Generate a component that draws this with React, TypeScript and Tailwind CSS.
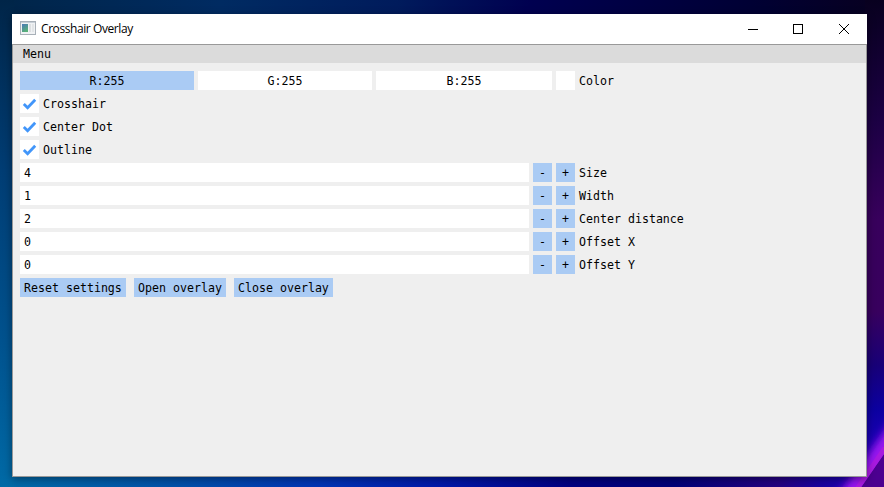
import React from "react";

const mono = "font-['DejaVu_Sans_Mono',monospace] text-[11.627px] leading-[21px] text-black whitespace-pre";

function Check({ label }: { label: string }) {
  return (
    <label className="flex h-[19px] gap-1">
      <span className="h-[19px] w-[19px] bg-white">
        <svg width="19" height="19" viewBox="0 0 19 19" fill="none">
          <path d="M3.8 9.9 L7.6 13.7 L15.2 5.7" stroke="#4296fa" strokeWidth="2.8" />
        </svg>
      </span>
      <span>{label}</span>
    </label>
  );
}

function Stepper({ label, value }: { label: string; value: string }) {
  return (
    <div className="flex h-[19px] gap-1">
      <div className="w-[509px] bg-white pl-1">{value}</div>
      <button className="flex w-[19px] justify-center bg-[#aacbf4]">-</button>
      <button className="flex w-[19px] justify-center bg-[#aacbf4]">+</button>
      <span>{label}</span>
    </div>
  );
}

function Backdrop() {
  return (
    <svg className="absolute inset-0" width="884" height="487">
      <defs>
        <linearGradient id="top">
          <stop offset="0" stopColor="#002548" />
          <stop offset="0.25" stopColor="#002b62" />
          <stop offset="0.45" stopColor="#001b5c" />
          <stop offset="0.6" stopColor="#000050" />
          <stop offset="0.85" stopColor="#000034" />
          <stop offset="1" stopColor="#08001f" />
        </linearGradient>
        <linearGradient id="bottom">
          <stop offset="0" stopColor="#006aa6" />
          <stop offset="0.2" stopColor="#0050a8" />
          <stop offset="0.36" stopColor="#0034b4" />
          <stop offset="0.5" stopColor="#0018a8" />
          <stop offset="0.65" stopColor="#000080" />
          <stop offset="0.76" stopColor="#000078" />
          <stop offset="0.88" stopColor="#240080" />
          <stop offset="0.93" stopColor="#1800a0" />
          <stop offset="1" stopColor="#2400c0" />
        </linearGradient>
        <linearGradient id="left" x2="0" y2="1">
          <stop offset="0" stopColor="#002548" />
          <stop offset="0.35" stopColor="#003d74" />
          <stop offset="0.7" stopColor="#00528e" />
          <stop offset="1" stopColor="#006aa6" />
        </linearGradient>
        <linearGradient id="right" x2="0" y2="1">
          <stop offset="0" stopColor="#08001f" />
          <stop offset="0.25" stopColor="#1c0044" />
          <stop offset="0.45" stopColor="#38005c" />
          <stop offset="0.64" stopColor="#38005e" />
          <stop offset="0.75" stopColor="#180078" />
          <stop offset="0.84" stopColor="#0c00a0" />
          <stop offset="1" stopColor="#3000d0" />
        </linearGradient>
        <filter id="soft" x="-1" y="-1" width="3" height="3"><feGaussianBlur stdDeviation="4" /></filter>
      </defs>
      <rect width="884" height="20" fill="url(#top)" />
      <rect y="470" width="884" height="17" fill="url(#bottom)" />
      <rect width="14" height="487" fill="url(#left)" />
      <rect x="865" width="19" height="487" fill="url(#right)" />
      <path d="M842 504 L899 425" stroke="#9c12f0" strokeWidth="16" filter="url(#soft)" />
      <path d="M861 487 L884 454 V487 Z" fill="#4c0090" />
      <path d="M857 489 L885 448" stroke="#a81ae0" strokeWidth="5" />
    </svg>
  );
}

export default function App() {
  return (
    <div className="relative h-[487px] w-[884px] overflow-hidden bg-[#000050] pl-3 pt-[14px]">
      <Backdrop />
      <main className="relative h-[463px] w-[855px] bg-[#efefef] shadow-[0_2px_8px_rgba(0,0,0,0.4)]">
        <header className="flex h-[30px] items-center bg-white pl-2">
          <svg width="16" height="14" viewBox="0 0 16 14" className="-mt-[3px]">
            <defs>
              <linearGradient id="app" x2="0.5" y2="1">
                <stop offset="0" stopColor="#4a78b8" />
                <stop offset="1" stopColor="#58b078" />
              </linearGradient>
            </defs>
            <rect x=".5" y=".5" width="15" height="13" fill="#f0f2f4" stroke="#a8b0b8" />
            <rect x="1" y="1" width="14" height="1" fill="#c8d0d8" />
            <rect x="2" y="3" width="6" height="8" fill="url(#app)" />
            <rect x="9" y="3" width="2" height="8" fill="#dde0e2" />
            <rect x="12" y="3" width="2" height="8" fill="#e2e5e7" />
          </svg>
          <h1 className="ml-[5px] font-['Open_Sans','Noto_Sans',sans-serif] text-[12px] leading-[16px] tracking-[-0.42px] text-black">Crosshair Overlay</h1>
          <svg className="ml-auto mr-[17px]" width="103" height="12" viewBox="0 0 103 12" fill="none" stroke="black" shapeRendering="crispEdges">
            <path d="M1 6.5H11" />
            <rect x="46.5" y="1.5" width="9" height="9" />
            <path d="M92 1L102 11M102 1L92 11" shapeRendering="auto" />
          </svg>
        </header>
        <section className={`h-[433px] border border-[#999999] ${mono}`}>
          <nav className="h-[18px] bg-[#dbdbdb] pl-[10px] leading-[18px]">Menu</nav>
          <div className="flex flex-col gap-1 pl-[7px] pt-2">
            <div className="flex h-[19px] gap-1 text-center">
              <div className="w-[174px] bg-[#aacbf4]">R:255</div>
              <div className="w-[174px] bg-white">G:255</div>
              <div className="w-[176px] bg-white">B:255</div>
              <div className="w-[19px] bg-white" />
              <span>Color</span>
            </div>
            <Check label="Crosshair" />
            <Check label="Center Dot" />
            <Check label="Outline" />
            <Stepper label="Size" value="4" />
            <Stepper label="Width" value="1" />
            <Stepper label="Center distance" value="2" />
            <Stepper label="Offset X" value="0" />
            <Stepper label="Offset Y" value="0" />
            <div className="flex h-[19px] gap-2">
              <button className="flex w-[106px] bg-[#aacbf4] pl-1">Reset settings</button>
              <button className="flex w-[92px] bg-[#aacbf4] pl-1">Open overlay</button>
              <button className="flex w-[99px] bg-[#aacbf4] pl-1">Close overlay</button>
            </div>
          </div>
        </section>
      </main>
    </div>
  );
}
